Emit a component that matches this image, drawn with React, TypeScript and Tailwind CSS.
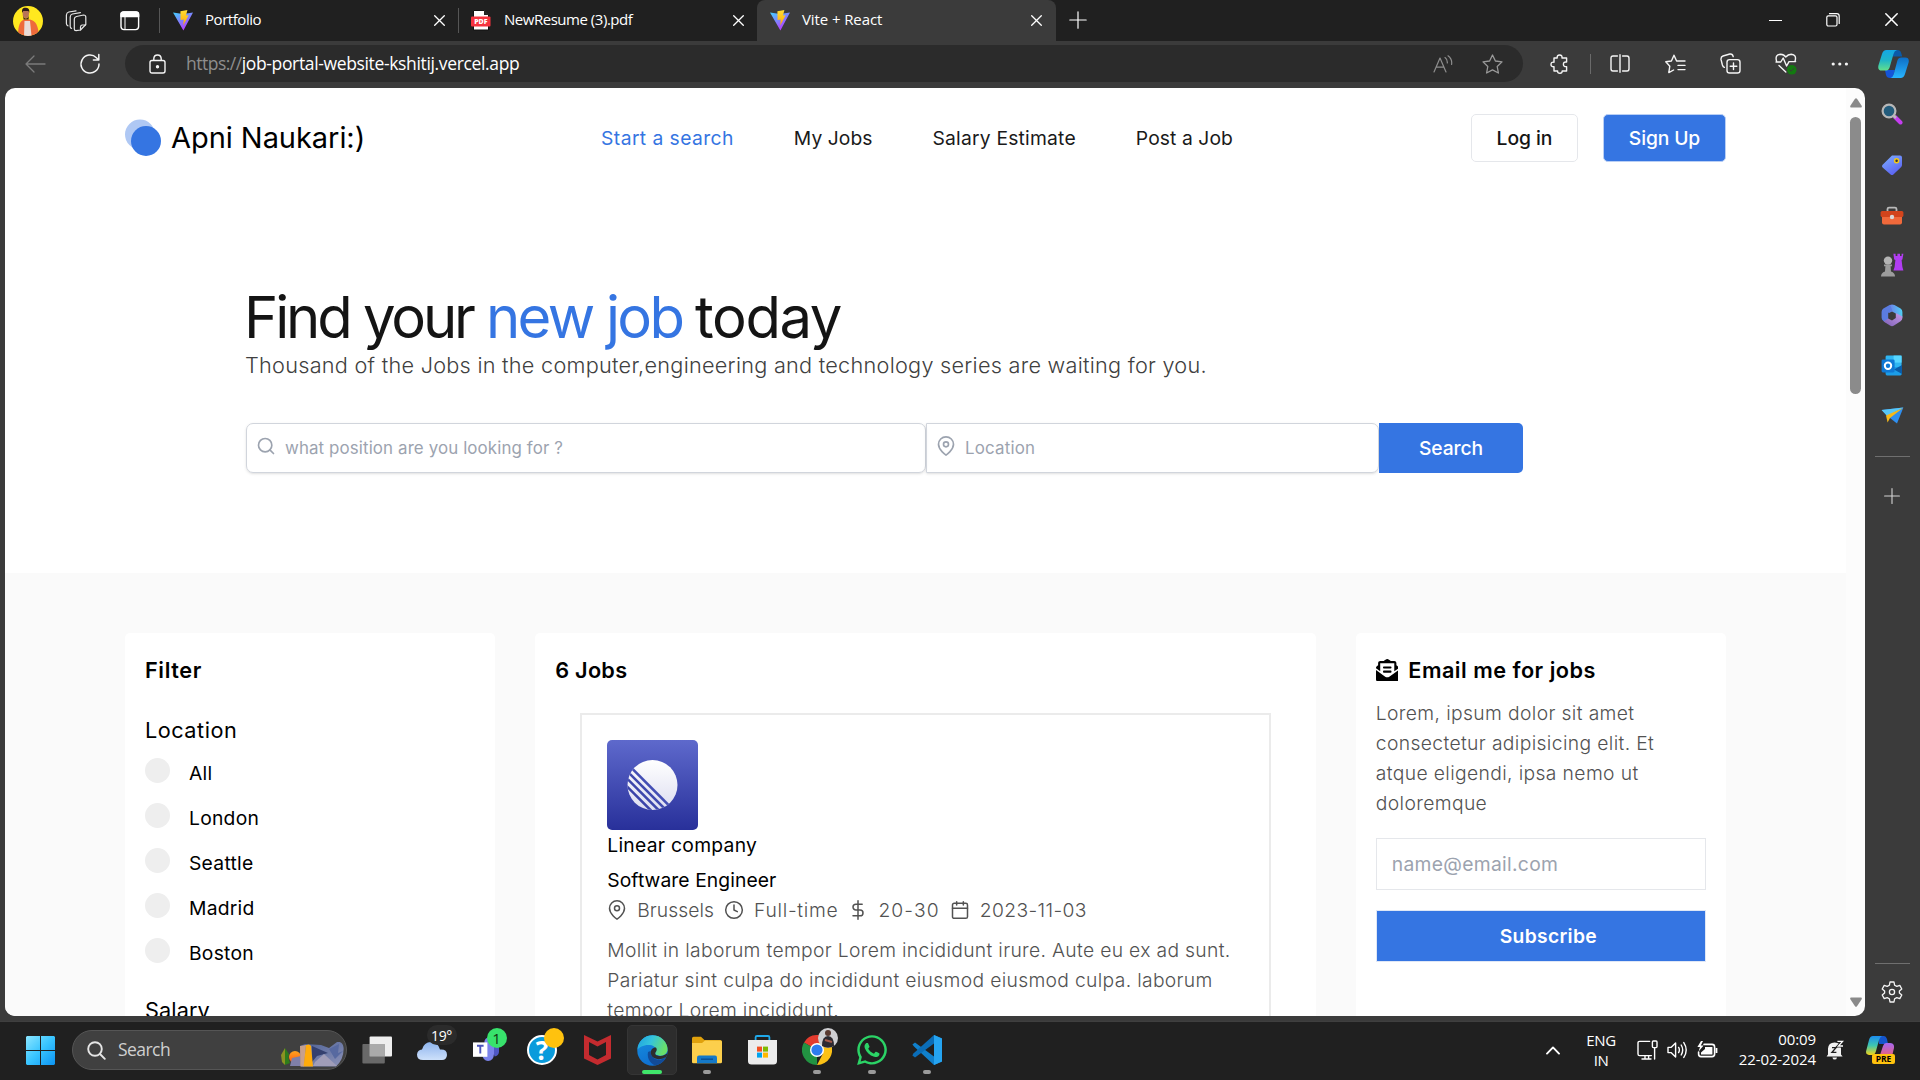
import type { ReactNode } from "react";
import { FiCalendar, FiClock, FiDollarSign, FiMapPin, FiSearch } from "react-icons/fi";
import { FaEnvelopeOpenText, FaWhatsapp } from "react-icons/fa";

/* ---------- shared bits ---------- */

const stroke = {
  fill: "none",
  stroke: "currentColor",
  strokeLinecap: "round" as const,
  strokeLinejoin: "round" as const,
};

function ViteIcon() {
  return (
    <svg width="20" height="21" viewBox="0 0 20 21">
      <defs>
        <linearGradient id="viteBody" x1="0" y1="0" x2="0.6" y2="1">
          <stop offset="0" stopColor="#41d1ff" />
          <stop offset="1" stopColor="#bd34fe" />
        </linearGradient>
        <linearGradient id="viteBolt" x1="0" y1="0" x2="0" y2="1">
          <stop offset="0" stopColor="#ffdd35" />
          <stop offset="1" stopColor="#ffa800" />
        </linearGradient>
      </defs>
      <path d="M0 2.6 L10 4 L20 2.6 L10.4 20.6Z" fill="url(#viteBody)" />
      <path d="M7.4 1.2 L14.4 0 L13 5.6 L15.6 5.2 L10.2 15.6 L10.8 9.4 L7.6 10Z" fill="url(#viteBolt)" />
    </svg>
  );
}

function PdfIcon() {
  return (
    <svg width="20" height="21" viewBox="0 0 20 21">
      <path d="M2.5 .5 H13 L17.5 5 V20 H2.5Z" fill="#fff" stroke="#111" strokeWidth="1" />
      <path d="M13 .5 V5 H17.5Z" fill="#222" />
      <rect x="0" y="6.5" width="19.5" height="10" rx="1" fill="#f5333f" />
      <text x="9.8" y="14" fontSize="7" fontWeight="800" fill="#fff" textAnchor="middle" fontFamily="Open Sans, sans-serif">
        PDF
      </text>
    </svg>
  );
}

function Cross({ size = 11 }: { size?: number }) {
  return (
    <svg width={size} height={size} viewBox="0 0 11 11" {...stroke} strokeWidth="1.3">
      <path d="M.7 .7 L10.3 10.3 M10.3 .7 L.7 10.3" />
    </svg>
  );
}

function Slot({ w, children }: { w: string; children?: ReactNode }) {
  return <div className={`flex h-full shrink-0 items-center justify-center ${w}`}>{children}</div>;
}

/* ---------- browser chrome ---------- */

function Avatar() {
  return (
    <svg width="30" height="30" viewBox="0 0 30 30">
      <defs>
        <clipPath id="avatarClip">
          <circle cx="15" cy="15" r="15" />
        </clipPath>
      </defs>
      <g clipPath="url(#avatarClip)">
        <rect width="30" height="30" fill="#ffe81f" />
        <path d="M5 30 C5 19 7 15 11 13.4 L17 13.4 C23 15 25 19 26 30Z" fill="#ee6a3b" />
        <path d="M11.5 15 L17 15 L18.5 30 L11 30Z" fill="#e9dcd8" />
        <ellipse cx="12.8" cy="7.6" rx="3.2" ry="4.6" fill="#b87456" />
        <path d="M9.2 7 C8.4 2.5 10.6 1.5 13 1.8 C16 2 16.8 4.2 16.2 7 L15.4 5 L10.2 5Z" fill="#2b1a18" />
        <path d="M10 9.8 C11 13.4 14.8 13.4 15.8 9.8 L15.6 13.4 L10.6 13.4Z" fill="#40241c" />
      </g>
    </svg>
  );
}

function TabBar() {
  return (
    <div className="flex h-[41px] shrink-0 items-center bg-[#202020] font-['Open_Sans',sans-serif] text-[15px] text-white">
      <Slot w="w-[56px]">
        <Avatar />
      </Slot>
      <Slot w="w-[43px]">
        <svg width="22" height="22" viewBox="0 0 22 22" {...stroke} strokeWidth="1.2" className="mr-1 text-neutral-200">
          <path d="M11.5 6.5 L18.5 5 Q20.8 5 20.8 7 V14.5 L15.5 20 L11 20.6 Q9.3 20.6 9.3 19 V9 Q9.4 7 11.5 6.5Z" />
          <path d="M20.5 15 H17 Q15.6 15.2 15.5 17 V20" />
          <path d="M6.6 18.4 Q5.2 18 5.2 16.4 V7 Q5.3 4.6 7.4 4 L15.4 2.6" />
          <path d="M3 15.8 Q1.4 15.4 1.4 13.6 V5 Q1.6 2.6 3.8 2 L11 .8" />
        </svg>
      </Slot>
      <Slot w="w-[60px]">
        <svg width="20" height="20" viewBox="0 0 20 20" {...stroke} strokeWidth="1.4" className="ml-[2px]">
          <rect x="1" y="1" width="17.6" height="17.6" rx="3" />
          <path d="M1 3 Q1 1 3.5 1 H16 Q18.6 1 18.6 3 V5.6 H1Z" fill="#fff" />
          <path d="M5 6 V18" strokeWidth="1" />
        </svg>
      </Slot>
      <div className="h-[25px] w-px bg-[#565656]" />
      <div className="flex h-full w-[298px] items-center pr-[13px] pl-[13px]">
        <ViteIcon />
        <span className="ml-3 flex-1 pb-[2px] tracking-[-0.45px]">Portfolio</span>
        <Cross />
      </div>
      <div className="h-[25px] w-px bg-[#565656]" />
      <div className="flex h-full w-[298px] items-center pr-[13px] pl-[12px]">
        <PdfIcon />
        <span className="ml-[13px] flex-1 pb-[2px] tracking-[-0.47px]">NewResume (3).pdf</span>
        <Cross />
      </div>
      <div className="flex h-full w-[299px] items-center rounded-t-lg bg-[#3b3b3b] pr-[14px] pl-[13px]">
        <ViteIcon />
        <span className="ml-3 flex-1 pb-[2px] tracking-[-0.1px]">Vite + React</span>
        <Cross />
      </div>
      <Slot w="w-[44px]">
        <svg width="18" height="18" viewBox="0 0 18 18" {...stroke} strokeWidth="1.2" className="-mt-[2px]">
          <path d="M9 .8 V17.2 M.8 9 H17.2" />
        </svg>
      </Slot>
      <div className="flex-1" />
      <Slot w="w-[58px]">
        <div className="h-px w-[13px] bg-white" />
      </Slot>
      <Slot w="w-[58px]">
        <svg width="14" height="14" viewBox="0 0 14 14" {...stroke} strokeWidth="1.2" className="-mt-[2px]">
          <rect x=".8" y="2.8" width="10.2" height="10.2" rx="1.5" />
          <path d="M3.5 .7 H10.8 Q13.2 .7 13.2 3 V10.5" />
        </svg>
      </Slot>
      <Slot w="w-[58px] pb-[2px]">
        <Cross size={13} />
      </Slot>
    </div>
  );
}

function CopilotIcon() {
  return (
    <svg width="31" height="28" viewBox="0 0 31 28">
      <defs>
        <linearGradient id="copA" x1="0" y1="0" x2="0" y2="1">
          <stop offset="0" stopColor="#14a7e6" />
          <stop offset=".5" stopColor="#1fb5c8" />
          <stop offset="1" stopColor="#63e08a" />
        </linearGradient>
        <linearGradient id="copB" x1="0" y1="0" x2="0" y2="1">
          <stop offset="0" stopColor="#0d6ec6" />
          <stop offset="1" stopColor="#28b5ff" />
        </linearGradient>
      </defs>
      <path d="M16 0 H19.5 Q22.5 0 23.2 3 L24.2 6.5 H14Z" fill="#0b5aa8" />
      <path d="M7 20 H17 L14.6 28 H12 Q8.8 28 8 25Z" fill="#1555d8" />
      <path d="M8.5 0 H19 Q16.4 .6 15.5 4 L11.6 17.5 Q10.7 20.6 7.6 20.6 H3.8 Q-.6 20.6 .4 15.5 L4 4 Q5.2 0 8.5 0Z" fill="url(#copA)" />
      <path d="M22.6 28 H12.6 Q14.8 27.4 15.8 24 L19.4 10.6 Q20.3 7.4 23.4 7.4 H27.2 Q31.6 7.4 30.6 12.5 L27 24 Q25.8 28 22.6 28Z" fill="url(#copB)" />
    </svg>
  );
}

function Toolbar() {
  return (
    <div className="flex h-[47px] shrink-0 items-center bg-[#3b3b3b] pb-[2px] text-neutral-100">
      <Slot w="w-[70px]">
        <svg width="21" height="18" viewBox="0 0 21 18" {...stroke} strokeWidth="1.3" className="text-[#7b7b7b]">
          <path d="M20 9 H1 M9 1 L1 9 L9 17" />
        </svg>
      </Slot>
      <Slot w="w-[40px]">
        <svg width="22" height="22" viewBox="0 0 22 22" {...stroke} strokeWidth="1.5">
          <path d="M20 11 A9 9 0 1 1 17.4 4.7 L19.5 6.8 M19.8 1.6 V7 H14.4" />
        </svg>
      </Slot>
      <div className="ml-[15px] flex h-[37px] w-[1398px] shrink-0 items-center rounded-full bg-[#2b2b2b]">
        <Slot w="w-[61px] pl-[3px]">
          <svg width="17" height="20" viewBox="0 0 17 20" {...stroke} strokeWidth="1.4">
            <rect x="1" y="6.5" width="15" height="12.5" rx="2" />
            <path d="M4.8 6.3 V4.6 Q5 1 8.5 1 Q12 1 12.2 4.6 V6.3" />
            <circle cx="8.5" cy="12.8" r="1" fill="currentColor" />
          </svg>
        </Slot>
        <div className="flex-1 font-['Open_Sans',sans-serif] text-[17.5px] tracking-[-0.35px] whitespace-nowrap">
          <span className="tracking-[-0.5px] text-[#8e8e8e]">https://</span>
          <span className="text-white">job-portal-website-kshitij.vercel.app</span>
        </div>
        <Slot w="w-[50px]">
          <svg width="20" height="18" viewBox="0 0 20 18" {...stroke} strokeWidth="1.2" className="text-[#8e8e8e]">
            <path d="M1 17 L7 3 L13 17 M3 12.2 H11 M12 2.6 Q14.6 4.5 14.3 8 M15 .8 Q19.4 4 18.6 9.4" />
          </svg>
        </Slot>
        <Slot w="w-[49px]">
          <svg width="21" height="20" viewBox="0 0 21 20" {...stroke} strokeWidth="1.3" className="text-[#9a9a9a]">
            <path d="M10.5 1 L13.4 7 L20 7.9 L15.2 12.5 L16.4 19 L10.5 15.9 L4.6 19 L5.8 12.5 L1 7.9 L7.6 7Z" />
          </svg>
        </Slot>
        <div className="w-[6px]" />
      </div>
      <Slot w="w-[74px]">
        <svg width="20" height="20" viewBox="0 0 20 20" {...stroke} strokeWidth="1.4">
          <path d="M4 4 H7.2 Q6.8 1 9.6 1 Q12.4 1 12 4 H16.6 V8 Q13.4 7.6 13.4 10.3 Q13.4 13 16.6 12.6 V17 H12.2 Q12.2 19.2 10 19.2 Q7.4 19.2 7.6 17 H4 V12.8 Q1 13 1 10.4 Q1 7.8 4 8.2Z" />
        </svg>
      </Slot>
      <div className="mr-[6px] -ml-[7px] h-[20px] w-px shrink-0 bg-[#6a6a6a]" />
      <Slot w="w-[45px]">
        <svg width="20" height="19" viewBox="0 0 20 19" {...stroke} strokeWidth="1.4">
          <path d="M7.4 2 H3 Q1 2 1 4.2 V14.8 Q1 17 3 17 H7.4 M12.6 2 H17 Q19 2 19 4.2 V14.8 Q19 17 17 17 H12.6 M10 .7 V18.3" />
        </svg>
      </Slot>
      <Slot w="w-[66px]">
        <svg width="21" height="20" viewBox="0 0 21 20" {...stroke} strokeWidth="1.4">
          <path d="M11.6 7 L9 1.2 L6.4 7 L.8 7.8 L4.8 12.2 L3.8 18.6 L8.6 16 M11.6 7 H20 M13 11.4 H20 M13 15.6 H20" />
        </svg>
      </Slot>
      <Slot w="w-[44px]">
        <svg width="21" height="21" viewBox="0 0 21 21" {...stroke} strokeWidth="1.4">
          <rect x="7" y="6.6" width="13" height="13.4" rx="2.6" />
          <path d="M13.5 10 V16.6 M10.2 13.3 H16.8 M4.4 14.4 Q3 14 2.4 12 L1 6.4 Q.8 3.8 3 3 L9.8 1 Q12.6 .6 13.2 3.6" />
        </svg>
      </Slot>
      <Slot w="w-[68px]">
        <svg width="22" height="22" viewBox="0 0 22 22" {...stroke} strokeWidth="1.4">
          <path d="M1.6 8.4 Q-.4 1.4 5.6 1.2 Q8.8 1.2 10.8 4 Q13 1.2 16.2 1.2 Q22 1.6 20 8.4 M1 9 H5.8 L8.2 5 L11.6 13 L14 8.6 H20.6 M4 12.6 L10.8 19" />
          <circle cx="16.8" cy="16.8" r="4.8" fill="#137a10" stroke="none" />
          <path d="M14.8 17 L16.2 18.3 L18.8 15.5" strokeWidth="1" stroke="#3b3b3b" />
        </svg>
      </Slot>
      <Slot w="w-[40px]">
        <svg width="18" height="4" viewBox="0 0 18 4" fill="currentColor">
          <circle cx="2.2" cy="2" r="1.6" />
          <circle cx="8.8" cy="2" r="1.6" />
          <circle cx="15.4" cy="2" r="1.6" />
        </svg>
      </Slot>
      <Slot w="w-[60px] pl-[6px]">
        <CopilotIcon />
      </Slot>
    </div>
  );
}

/* ---------- website ---------- */

function Header() {
  return (
    <header className="flex h-[100px] items-center justify-between">
      <div className="flex items-center">
        <svg width="37" height="38" viewBox="0 0 37 38">
          <circle cx="15" cy="15.5" r="15" fill="#afc8f4" />
          <circle cx="21" cy="22" r="15" fill="#3575e2" />
        </svg>
        <span className="mb-[2px] ml-[9px] w-[192px] text-[29px] leading-none font-[370] tracking-[-0.05px] whitespace-nowrap text-black">
          Apni Naukari:)
        </span>
      </div>
      <nav className="flex gap-[60px] text-[19.3px] font-[370] whitespace-nowrap text-[#1a1a1a]">
        <a className="tracking-[0.42px] text-[#3575e2]">Start a search</a>
        <a className="tracking-[0.05px]">My Jobs</a>
        <a className="tracking-[0.2px]">Salary Estimate</a>
        <a className="tracking-[0.08px]">Post a Job</a>
      </nav>
      <div className="flex gap-[25px] text-[19.3px] font-medium">
        <button className="h-[48px] w-[107px] rounded-[5px] border border-gray-200 font-[450] tracking-[-0.05px] text-[#141414]">
          Log in
        </button>
        <button className="h-[48px] w-[123px] rounded-[5px] border border-[#b9cff5] bg-[#3575e2] tracking-[-0.12px] text-white">
          Sign Up
        </button>
      </div>
    </header>
  );
}

function Hero() {
  return (
    <section className="mt-[99px] ml-[121px]">
      <h1 className="-ml-[2px] flex text-[58px] leading-[60px] tracking-[-3.1px] whitespace-nowrap text-[#141414]">
        <span className="w-[242px]">Find your</span>
        <span className="w-[209px] tracking-[-2.7px] text-[#3575e2]">new job</span>
        <span className="tracking-[-1.4px]">today</span>
      </h1>
      <p className="mt-[3px] -ml-px text-[21.7px] leading-[30px] font-[350] tracking-[0.255px] whitespace-nowrap text-[#404040]">
        Thousand of the Jobs in the computer,engineering and technology series are waiting for you.
      </p>
      <div className="mt-[43px] flex h-[50px] text-[16.9px] text-[#9ca3af]">
        <div className="flex w-[680px] items-center rounded-[7px] border-[1.5px] border-gray-300 pl-[9px] shadow-sm">
          <FiSearch className="-mt-1 size-[20px]" />
          <span className="mt-[2px] ml-[9px] tracking-[0.11px]">what position are you looking for ?</span>
        </div>
        <div className="flex w-[453px] items-center rounded-r-[7px] border-[1.5px] border-gray-300 pl-[9px] shadow-sm">
          <FiMapPin className="-mt-1 size-[20px]" />
          <span className="mt-[2px] ml-[9px] tracking-[0.2px]">Location</span>
        </div>
        <button className="w-[144px] rounded-r-[5px] bg-[#3575e2] text-[19.3px] font-medium tracking-[-0.1px] text-white">
          Search
        </button>
      </div>
    </section>
  );
}

function FilterCard() {
  const cities = ["All", "London", "Seattle", "Madrid", "Boston"];
  return (
    <div className="h-[500px] rounded-[5px] bg-white px-5 pt-5 text-black">
      <h2 className="text-[21.7px] leading-[34px] font-semibold tracking-[0.6px]">Filter</h2>
      <h3 className="mt-[26px] mb-[3px] text-[21.7px] leading-[34px] tracking-[0.5px]">Location</h3>
      {cities.map((city) => (
        <div key={city} className="flex h-[45px] items-center gap-[19px] text-[19.3px] font-[370] tracking-[0.25px]">
          <span className="mb-[5px] size-[25px] rounded-full bg-[#eeeeee]" />
          <span className="mt-[2px]">{city}</span>
        </div>
      ))}
      <h3 className="mt-[18px] text-[21.7px] leading-[34px] tracking-[0.1px]">Salary</h3>
    </div>
  );
}

function LinearLogo() {
  return (
    <svg width="91" height="90" viewBox="0 0 91 90" className="rounded-[5px]">
      <defs>
        <linearGradient id="linBg" x1="0" y1="0" x2="0" y2="1">
          <stop offset="0" stopColor="#5e69cc" />
          <stop offset="1" stopColor="#28309a" />
        </linearGradient>
        <linearGradient id="linFg" x1="0" y1="0" x2="0" y2="1">
          <stop offset="0" stopColor="#ffffff" />
          <stop offset="1" stopColor="#dcddf0" />
        </linearGradient>
        <clipPath id="linClip">
          <circle cx="45.5" cy="45" r="25" />
        </clipPath>
      </defs>
      <rect width="91" height="90" fill="url(#linBg)" />
      <g clipPath="url(#linClip)">
        <rect x="20" y="20" width="51" height="51" fill="url(#linFg)" />
        <g stroke="#434eb4" strokeWidth="2.6">
          <path d="M20 23.5 L70 73.5" />
          <path d="M14 25 L64 75" stroke="#3f49ae" />
          <path d="M12 30.5 L62 80.5" stroke="#3c46ab" />
          <path d="M8 34.5 L58 84.5" stroke="#3a43a8" />
        </g>
      </g>
    </svg>
  );
}

function JobsCard() {
  return (
    <div className="col-span-2 h-[500px] rounded-[5px] bg-white px-5 pt-5 text-black">
      <h2 className="text-[21.7px] leading-[34px] font-semibold tracking-[0.25px]">6 Jobs</h2>
      <div className="mx-[25px] mt-[26px] h-[400px] border-2 border-[#ebebeb] p-[25px] text-[19.3px] leading-[30px] font-[370] whitespace-nowrap">
        <LinearLogo />
        <p className="tracking-[0.27px]">Linear company</p>
        <p className="mt-[5px] tracking-[0.08px]">Software Engineer</p>
        <div className="flex items-center gap-[10px] font-[350] text-[#525252]">
          <FiMapPin className="size-[20px]" strokeWidth={1.8} />
          <span className="tracking-[0.06px]">Brussels</span>
          <FiClock className="size-[20px]" strokeWidth={1.8} />
          <span className="tracking-[0.7px]">Full-time</span>
          <FiDollarSign className="size-[20px]" strokeWidth={1.8} />
          <span className="tracking-[1.1px]">20-30</span>
          <FiCalendar className="size-[20px]" strokeWidth={1.8} />
          <span className="tracking-[0.36px]">2023-11-03</span>
        </div>
        <p className="mt-[10px] font-[350] tracking-[0.325px] text-[#525252]">
          Mollit in laborum tempor Lorem incididunt irure. Aute eu ex ad sunt.
          <br />
          Pariatur sint culpa do incididunt eiusmod eiusmod culpa. laborum
          <br />
          tempor Lorem incididunt.
        </p>
      </div>
    </div>
  );
}

function EmailCard() {
  return (
    <div className="h-[500px] rounded-[5px] bg-white px-5 pt-5">
      <h2 className="flex items-center gap-[10px] text-[21.7px] leading-[34px] font-semibold tracking-[0.5px] whitespace-nowrap text-black">
        <FaEnvelopeOpenText className="size-[22.5px]" />
        Email me for jobs
      </h2>
      <p className="mt-[11px] text-[19.3px] leading-[30px] font-[350] tracking-[0.37px] whitespace-nowrap text-[#525252]">
        Lorem, ipsum dolor sit amet
        <br />
        consectetur adipisicing elit. Et
        <br />
        atque eligendi, ipsa nemo ut
        <br />
        doloremque
      </p>
      <div className="mt-[20px] flex h-[52px] items-center border border-gray-200 pl-[15px] text-[19.3px] tracking-[0.3px] text-[#9ca3af]">
        name@email.com
      </div>
      <button className="mt-[20px] flex h-[52px] w-full items-center justify-center border border-[#dfe7f6] bg-[#3575e2] pl-[15px] text-[19.3px] font-semibold tracking-[0.3px] text-white">
        Subscribe
      </button>
    </div>
  );
}

function Website() {
  return (
    <main className="h-full flex-1 overflow-hidden bg-white font-['Inter',sans-serif]">
      <div className="h-[485px] px-[120px]">
        <Header />
        <Hero />
      </div>
      <div className="grid grid-cols-4 gap-10 bg-[#fafafa] px-[120px] pt-[60px]">
        <FilterCard />
        <JobsCard />
        <EmailCard />
      </div>
    </main>
  );
}

function ScrollBar() {
  return (
    <div className="flex h-full w-[19px] shrink-0 flex-col items-center bg-[#fcfcfc]">
      <svg width="12" height="10" viewBox="0 0 12 10" className="mt-[10px]" fill="#8a8a8a">
        <path d="M5 .8 Q6 -.4 7 .8 L11.8 8 Q12 9.4 11 9.4 H1 Q0 9.4 .2 8Z" />
      </svg>
      <div className="mt-[9px] h-[277px] w-[11px] rounded-full bg-[#8b8b8b]" />
      <div className="flex-1" />
      <svg width="12" height="10" viewBox="0 0 12 10" className="mb-[9px]" fill="#8a8a8a">
        <path d="M5 9.2 Q6 10.4 7 9.2 L11.8 2 Q12 .6 11 .6 H1 Q0 .6 .2 2Z" />
      </svg>
    </div>
  );
}

/* ---------- edge sidebar ---------- */

function SideBar() {
  return (
    <aside className="flex h-full w-[55px] shrink-0 flex-col items-center bg-[#3b3b3b] pr-px">
      <div className="flex h-[52px] items-center">
        <svg width="22" height="22" viewBox="0 0 22 22">
          <path d="M14 14 L19.5 19.5" stroke="#c53df0" strokeWidth="4" strokeLinecap="round" />
          <path d="M12.5 12.5 L15 15" stroke="#b9b9b9" strokeWidth="2.5" />
          <circle cx="8" cy="8" r="6.4" fill="#235c7c" stroke="#b7b7b7" strokeWidth="2.2" />
        </svg>
      </div>
      <div className="flex h-[50px] items-center">
        <svg width="22" height="22" viewBox="0 0 22 22">
          <defs>
            <linearGradient id="tagG" x1="0" y1="0" x2=".6" y2="1">
              <stop offset="0" stopColor="#7fb2ff" />
              <stop offset="1" stopColor="#5b62f2" />
            </linearGradient>
          </defs>
          <path d="M11 1.4 H19 Q21 1.4 21 3.4 V11 Q21 12 20.2 13 L12.4 20.4 Q11 21.6 9.6 20.4 L1.6 13.6 Q.4 12.4 1.4 11Z" fill="url(#tagG)" />
          <circle cx="15.6" cy="6.8" r="2" fill="#333" stroke="#f5c915" strokeWidth="1.5" />
        </svg>
      </div>
      <div className="flex h-[50px] items-center pt-[2px]">
        <svg width="24" height="20" viewBox="0 0 24 20">
          <path d="M7.5 5 V3 Q7.6 1.6 9 1.6 H15 Q16.4 1.6 16.5 3 V5" fill="none" stroke="#b9b9b9" strokeWidth="1.8" />
          <path d="M2 10 H22 V16.6 Q22 18.6 20 18.6 H4 Q2 18.6 2 16.6Z" fill="#f0693b" />
          <rect x=".6" y="5" width="22.8" height="6" rx="1.6" fill="#d2441c" />
          <circle cx="12" cy="11" r="2.2" fill="#d9d9d9" />
        </svg>
      </div>
      <div className="flex h-[50px] items-center">
        <svg width="24" height="24" viewBox="0 0 24 24">
          <path d="M13.4 .8 H15.6 V3 H17.4 V.8 H20 V3 H21.6 V.8 H23.4 L22.4 6.4 L21.6 7 L22.4 14 L23.4 17.4 H13.4 L14.6 14 L15.4 7 L14.2 6.4Z" fill="#b13df2" />
          <circle cx="8" cy="7.6" r="4.2" fill="#b4b4b4" />
          <path d="M4 11.6 H12 V13.2 H10.6 L11 18.6 Q15 20 15 23.4 H1 Q1 20 5 18.6 L5.4 13.2 H4Z" fill="#9c9c9c" />
        </svg>
      </div>
      <div className="flex h-[50px] items-center">
        <svg width="22" height="23" viewBox="0 0 22 23">
          <defs>
            <linearGradient id="m365a" x1="0" y1="0" x2="1" y2="0">
              <stop offset="0" stopColor="#6f7de8" />
              <stop offset="1" stopColor="#4fd0f5" />
            </linearGradient>
            <linearGradient id="m365b" x1="0" y1="1" x2="1" y2="0">
              <stop offset="0" stopColor="#7d5fb5" />
              <stop offset="1" stopColor="#c79be8" />
            </linearGradient>
          </defs>
          <path d="M9 1 L11 .4 L13.5 1 L19.6 4.6 Q21.4 5.8 21.4 8 V13.4 L14.8 9.4 L11 7.4 L8 9Z" fill="url(#m365a)" />
          <path d="M9 .8 L11.4 6.6 L7.2 9 V19.8 L2.4 17 Q.6 15.8 .6 13.6 V8 Q.6 5.8 2.4 4.6Z" fill="#5b7ce0" />
          <path d="M21.4 12.6 V14 Q21.4 16 19.6 17.2 L13 21.6 Q11 22.8 9 21.6 L2.6 17.4 L7.2 14.4 L11 16.6 L14.8 14 L14.8 9Z" fill="url(#m365b)" />
        </svg>
      </div>
      <div className="flex h-[50px] items-center">
        <svg width="22" height="21" viewBox="0 0 22 21">
          <rect x="4.6" y=".6" width="16" height="13" rx="1.4" fill="#2fb6f2" />
          <rect x="12.6" y=".6" width="8" height="7" fill="#57d6ff" />
          <path d="M4.6 12 H20.8 V18.8 Q20.8 20.4 19.2 20.4 H6 Q4.6 20.4 4.6 18.8Z" fill="#1b9de8" />
          <path d="M13 14.6 L21 10 V19Z" fill="#0a5ca8" />
          <rect x=".6" y="4.4" width="13" height="13" rx="1.4" fill="#0f78d4" />
          <circle cx="7" cy="10.8" r="3.2" fill="none" stroke="#fff" strokeWidth="2" />
        </svg>
      </div>
      <div className="flex h-[50px] items-center">
        <svg width="23" height="17" viewBox="0 0 23 17">
          <path d="M.6 3 L22.4 .6 L16 16.4 L9.6 11.6Z" fill="#2f8ff0" />
          <path d="M.6 3 L22.4 .6 L6 9Z" fill="#57c7f7" />
          <path d="M5 8.4 L22 1 L9 11 L6.6 15.6Z" fill="#f6b91a" />
        </svg>
      </div>
      <div className="mt-[16px] h-px w-[35px] bg-[#6f6f6f]" />
      <svg width="16" height="16" viewBox="0 0 16 16" {...stroke} strokeWidth="1.1" className="mt-[31px] text-neutral-300">
        <path d="M8 .6 V15.4 M.6 8 H15.4" />
      </svg>
      <div className="flex-1" />
      <div className="h-px w-[35px] bg-[#6f6f6f]" />
      <svg width="22" height="22" viewBox="0 0 22 22" {...stroke} strokeWidth="1.3" className="mt-[17px] mb-[18px] text-neutral-100">
        <path d="M9 1 H13 L13.6 4.2 L15.8 5.4 L18.8 4.4 L20.8 8 L18.4 10 V12 L20.8 14 L18.8 17.6 L15.8 16.6 L13.6 17.8 L13 21 H9 L8.4 17.8 L6.2 16.6 L3.2 17.6 L1.2 14 L3.6 12 V10 L1.2 8 L3.2 4.4 L6.2 5.4 L8.4 4.2Z" />
        <circle cx="11" cy="11" r="2.6" />
      </svg>
    </aside>
  );
}

/* ---------- taskbar ---------- */

function WindowsLogo() {
  return (
    <svg width="29" height="29" viewBox="0 0 29 29">
      <defs>
        <linearGradient id="winG" x1="0" y1="0" x2="1" y2="1">
          <stop offset="0" stopColor="#8ce6ff" />
          <stop offset=".5" stopColor="#38c4ff" />
          <stop offset="1" stopColor="#0c93f2" />
        </linearGradient>
      </defs>
      <path d="M1 0 H14 V14 H0 V1Z M15 0 H28 L29 1 V14 H15Z M0 15 H14 V29 H1 L0 28Z M15 15 H29 V28 L28 29 H15Z" fill="url(#winG)" />
    </svg>
  );
}

function Landscape() {
  return (
    <svg width="63" height="25" viewBox="0 0 63 25">
      <defs>
        <linearGradient id="sunG" x1="0" y1="0" x2="0" y2="1">
          <stop offset="0" stopColor="#ffa41f" />
          <stop offset="1" stopColor="#ff5a12" />
        </linearGradient>
        <linearGradient id="rockG" x1="0" y1="0" x2="1" y2="1">
          <stop offset="0" stopColor="#4a5f95" />
          <stop offset="1" stopColor="#8e93b8" />
        </linearGradient>
      </defs>
      <path d="M4 6 L8 12 L7.4 16 L9 21 L4 23Z" fill="#2f7c1b" />
      <path d="M4 6 L0 13 L1 20 L4 23Z" fill="#8b9322" />
      <circle cx="14" cy="15" r="6" fill="url(#sunG)" />
      <path d="M9 24 L11 16 L20 14 L22 24Z" fill="#7f7fa8" />
      <path d="M19 4 L24 2 L40 3 L48 6 L56 0 Q62 -1 62.6 6 Q63 17 55 24.6 H20Z" fill="url(#rockG)" />
      <path d="M19 4 L25 3 L23 24.6 H19.4Z" fill="#c7a08c" />
      <path d="M31 4 L47 11 L36 14 L31 20Z" fill="#34406f" />
      <path d="M34 20 L43 12 L56 24 H32Z" fill="#a09db8" />
      <path d="M48 7 L58 2 L57 11 L62 9 L54 17Z" fill="#5769a0" />
      <path d="M25 3 Q29 1.6 30 4 L32 24.6 H22.6Z" fill="#ffab0a" />
    </svg>
  );
}

function EdgeIcon() {
  return (
    <svg width="31" height="31" viewBox="0 0 31 31">
      <defs>
        <linearGradient id="edgeA" x1="0" y1="0" x2="1" y2=".3">
          <stop offset="0" stopColor="#1c9fe0" />
          <stop offset=".5" stopColor="#35c4dc" />
          <stop offset="1" stopColor="#69e06a" />
        </linearGradient>
        <linearGradient id="edgeB" x1="0" y1="0" x2=".4" y2="1">
          <stop offset="0" stopColor="#1790e0" />
          <stop offset="1" stopColor="#0f6fd0" />
        </linearGradient>
        <clipPath id="edgeClip">
          <circle cx="15.5" cy="15.5" r="15.2" />
        </clipPath>
      </defs>
      <g clipPath="url(#edgeClip)">
        <rect width="31" height="31" fill="url(#edgeB)" />
        <path d="M11 17 C9.6 24 14 30 21 31 L31 31 V22 L24 24.6 C19 25.6 13 22 13.6 16Z" fill="#124b98" />
        <path d="M0 15 C1 6 7 0 15.5 0 C25 0 31 6 31 13.4 C31 18 27 20.8 23 20.8 C19.4 20.8 17.6 19 18.4 17.6 C20.4 14 18 10.6 13 10 C7 9.4 2.4 12 0 15Z" fill="url(#edgeA)" />
        <path d="M19 12.6 C20.6 14.6 19.4 16.2 18.4 17.6 C17.6 19.2 18.8 20.6 22 21 C25.6 21.4 28.6 20 31 17.6 L31 23 L28 22.6 C23 25.4 15 24.6 13.8 18.6 C13.4 14.6 16 12.4 19 12.6Z" fill="#2d2d2d" />
      </g>
    </svg>
  );
}

function TaskIcon({ children, running }: { children: ReactNode; running?: boolean }) {
  return (
    <div className="relative flex h-[50px] w-[55px] shrink-0 items-center justify-center">
      {children}
      {running && <span className="absolute bottom-[1px] h-[4px] w-[8px] rounded-full bg-[#9a9a9a]" />}
    </div>
  );
}

function Taskbar() {
  return (
    <footer className="flex h-[59px] shrink-0 items-center border-t border-[#3f3f3f] bg-[#202020] pb-[2px] font-['Open_Sans',sans-serif] text-white">
      <div className="ml-[26px]">
        <WindowsLogo />
      </div>
      <div className="ml-[17px] flex h-[40px] w-[275px] items-center rounded-full border border-[#555] bg-[#404040] pr-[2px] pl-[14px]">
        <svg width="19" height="19" viewBox="0 0 19 19" {...stroke} strokeWidth="1.9" className="text-neutral-200">
          <circle cx="8" cy="8" r="6.8" />
          <path d="M13 13 L17.8 17.8" />
        </svg>
        <span className="ml-[12px] flex-1 pb-px text-[17.5px] tracking-[-0.55px] text-[#cfcfcf]">Search</span>
        <div className="mt-[9px]">
          <Landscape />
        </div>
      </div>
      <div className="ml-[2.5px] flex items-center">
        <TaskIcon>
          <svg width="30" height="28" viewBox="0 0 30 28">
            <rect x="7.6" y=".4" width="22.4" height="20" rx="1" fill="#eeeeee" />
            <rect x=".4" y="8" width="22.4" height="19.6" rx="1" fill="#777" fillOpacity=".85" />
            <path d="M7.6 8 H22.8 V20.4 H7.6Z" fill="#aaa" />
          </svg>
        </TaskIcon>
        <TaskIcon>
          <svg width="30" height="22" viewBox="0 0 30 22" className="mt-[2px]">
            <defs>
              <linearGradient id="cloudG" x1="0" y1="0" x2="0" y2="1">
                <stop offset="0" stopColor="#8db4ee" />
                <stop offset="1" stopColor="#cde0fa" />
              </linearGradient>
            </defs>
            <path d="M6 20 Q0 20 0 14.5 Q.4 10 5 9.6 Q7 2 14 2 Q21 2 23 9.6 Q30 9 30 15 Q29.6 20 25 20Z" fill="url(#cloudG)" />
          </svg>
          <span className="absolute top-0 left-[22px] flex h-[20px] w-[30px] items-center justify-center rounded-full bg-[#2b2b2b] text-[14px] tracking-[-0.4px]">
            19°
          </span>
        </TaskIcon>
        <TaskIcon>
          <svg width="28" height="26" viewBox="0 0 28 26">
            <circle cx="16" cy="5" r="4.6" fill="#7b83eb" />
            <path d="M18 8 H26 V15 Q25.6 19 21.6 19.4Z" fill="#4f57c4" />
            <path d="M9 8 H21 V17 Q20.6 24 15 24 Q10 24 9 17Z" fill="#7b83eb" />
            <rect x="0" y="5.4" width="14.4" height="14.4" fill="#fff" />
            <path d="M4 8.8 H10.6 M7.3 8.8 V16.4" stroke="#4b53bc" strokeWidth="1.9" />
          </svg>
          <span className="absolute top-[3px] left-[27px] flex size-[20px] items-center justify-center rounded-full bg-[#38e26c] text-[15px] text-[#113311]">
            1
          </span>
        </TaskIcon>
        <TaskIcon>
          <span className="flex size-[30px] items-center justify-center rounded-full border-2 border-white bg-[#0a9bdc] text-[26px] leading-none font-bold">
            ?
          </span>
          <span className="absolute top-[3px] left-[29px] size-[20px] rounded-full bg-[#ffc20e]" />
        </TaskIcon>
        <TaskIcon>
          <svg width="27" height="30" viewBox="0 0 27 30">
            <path d="M0 0 L13.5 6.6 L27 0 V23.4 L13.5 30 L0 23.4Z M5 7 V20 L13.5 24.4 L22 20 V7 L13.5 11.6Z" fill="#c42b2f" fillRule="evenodd" />
          </svg>
        </TaskIcon>
        <div className="relative flex h-[50px] w-[55px] items-center justify-center">
          <div className="flex size-[50px] items-center justify-center rounded-[5px] border border-[#353535] bg-[#2d2d2d]">
            <EdgeIcon />
          </div>
          <span className="absolute bottom-[1px] h-[4px] w-[20px] rounded-full bg-[#40e66b]" />
        </div>
        <TaskIcon running>
          <svg width="30" height="28" viewBox="0 0 30 28">
            <path d="M0 2.4 Q0 .8 1.6 .8 H9 L12.4 4 H28 Q30 4 30 6 V10 H0Z" fill="#e0a10c" />
            <path d="M0 7 H10 L13 4.4 H28.6 Q30 4.4 30 6 V26 Q30 27.2 28.6 27.2 H1.4 Q0 27.2 0 26Z" fill="#fccf4c" />
            <path d="M5 27.2 V21.6 Q5 19.6 7 19.6 H23 Q25 19.6 25 21.6 V27.2Z" fill="#1579c8" />
            <path d="M9 23.2 H21" stroke="#0b4f92" strokeWidth="1.4" />
          </svg>
        </TaskIcon>
        <TaskIcon>
          <svg width="29" height="30" viewBox="0 0 29 30">
            <path d="M7.6 6 V2.2 Q7.6 1 9 1 H20 Q21.4 1 21.4 2.2 V6" fill="none" stroke="#1fa9ea" strokeWidth="1.8" />
            <path d="M0 5 H29 V26 Q29 29.6 25.4 29.6 H3.6 Q0 29.6 0 26Z" fill="#ececec" />
            <path d="M9 11.6 H14 V16.6 H9Z" fill="#f25022" />
            <path d="M15 11.6 H20 V16.6 H15Z" fill="#7fba00" />
            <path d="M9 17.6 H14 V22.6 H9Z" fill="#00a4ef" />
            <path d="M15 17.6 H20 V22.6 H15Z" fill="#ffb900" />
          </svg>
        </TaskIcon>
        <TaskIcon running>
          <svg width="30" height="30" viewBox="0 0 30 30">
            <path d="M15 15 L2 7.5 A15 15 0 0 1 28 7.5Z" fill="#e33b2e" />
            <path d="M15 15 L15 30 A15 15 0 0 1 2 7.5Z" fill="#229342" />
            <path d="M15 8 H28.4 A15 15 0 0 1 15 30 L21 18.5Z" fill="#fbc116" />
            <circle cx="15" cy="15" r="7" fill="#fff" />
            <circle cx="15" cy="15" r="5.6" fill="#2e7cf0" />
          </svg>
          <svg width="20" height="20" viewBox="0 0 20 20" className="absolute top-[3px] left-[28px]">
            <circle cx="10" cy="10" r="10" fill="#cfcfd2" />
            <circle cx="10" cy="5" r="3" fill="#5a3a30" />
            <path d="M4 18 Q4 8 10 8 Q16 8 16 18 Q10 21.6 4 18Z" fill="#2d2a30" />
            <path d="M7 12 L14 14" stroke="#a55a4a" strokeWidth="2" />
          </svg>
        </TaskIcon>
        <TaskIcon running>
          <FaWhatsapp className="size-[34px] text-[#2bd366]" />
        </TaskIcon>
        <TaskIcon running>
          <svg width="30" height="30" viewBox="0 0 30 30">
            <path d="M22 0 L30 3.4 V26.6 L22 30 L2 11.4 L.4 9.6 L3 7.4 L22 21.6Z" fill="#1080cc" />
            <path d="M22 0 V8.4 L3 22.6 L.4 20.6 L1.4 18.6Z" fill="#0a6db8" />
            <path d="M22 0 L30 3.4 V26.6 L22 30Z" fill="#25a4f1" />
          </svg>
        </TaskIcon>
      </div>
      <div className="flex-1" />
      <svg width="14" height="9" viewBox="0 0 14 9" {...stroke} strokeWidth="1.9">
        <path d="M1 7.6 L7 1.4 L13 7.6" />
      </svg>
      <div className="mb-px ml-[25px] w-[32px] text-center text-[15px] leading-[20px] tracking-[-0.4px]">
        ENG
        <br />
        IN
      </div>
      <svg width="21" height="20" viewBox="0 0 21 20" {...stroke} strokeWidth="1.4" className="ml-[20px]">
        <path d="M12.6 1.4 H2.6 Q1 1.4 1 3 V14 Q1 15.6 2.6 15.6 H14.4 M5 19 H14 M8 15.8 V19 M11.6 15.8 V19 M17.6 8 V19" />
        <rect x="15.4" y="1" width="4.6" height="6.6" rx="1" />
      </svg>
      <svg width="21" height="18" viewBox="0 0 21 18" {...stroke} strokeWidth="1.4" className="ml-[9px]">
        <path d="M1 6.4 H4 L8.6 2 V16 L4 11.6 H1Z M11.6 6.4 Q13.2 9 11.6 11.6 M14.2 4 Q17.2 9 14.2 14 M16.8 1.6 Q21.6 9 16.8 16.4" />
      </svg>
      <svg width="21" height="17" viewBox="0 0 21 17" className="mb-[2px] ml-[9px]">
        <path d="M7 3.4 H15 Q17.6 3.4 17.6 6 V13 Q17.6 15.6 15 15.6 H4 Q1.6 15.6 1.6 13 V11" {...stroke} strokeWidth="1.6" />
        <path d="M8 6 H15.4 V13.4 H4 V11.6 L8 8Z" fill="#fff" />
        <path d="M18.6 7 H20.4 V12 H18.6Z" fill="#fff" />
        <path d="M4 0 L.4 6 H3 L1.6 10.4 L6.6 4.4 H3.8 L6 0Z" fill="#fff" />
      </svg>
      <div className="mb-[2px] ml-[10px] w-[88px] text-right text-[15px] leading-[20px] tracking-[-0.1px]">
        00:09
        <br />
        22-02-2024
      </div>
      <svg width="18" height="20" viewBox="0 0 18 20" className="ml-[10px]">
        <path d="M2 14.6 V8.6 Q2.4 2.4 8.6 2.4 Q15 2.4 15 8.6 V14.6 L16.6 16.4 H.6Z M6.4 17.4 H11 Q10.6 19.6 8.7 19.6 Q6.8 19.6 6.4 17.4Z" fill="#f2f2f2" />
        <path d="M11.4 1.4 H16.6 L12.4 6 H17" stroke="#202020" strokeWidth="3" fill="none" />
        <path d="M11.4 1.4 H16.6 L12.4 6 H17" stroke="#fff" strokeWidth="1.3" fill="none" />
        <path d="M6 7.6 H10 L6 12.4 H10.4" stroke="#202020" strokeWidth="1.4" fill="none" />
      </svg>
      <div className="relative mr-[25px] ml-[22px] h-[28px] w-[29px]">
        <svg width="28" height="22" viewBox="0 0 28 22">
          <defs>
            <linearGradient id="preA" x1="0" y1="0" x2="0" y2="1">
              <stop offset="0" stopColor="#1c8df0" />
              <stop offset=".5" stopColor="#3ec6b0" />
              <stop offset="1" stopColor="#f2d417" />
            </linearGradient>
            <linearGradient id="preB" x1="0" y1="0" x2="0" y2="1">
              <stop offset="0" stopColor="#a667f2" />
              <stop offset="1" stopColor="#f2606a" />
            </linearGradient>
          </defs>
          <path d="M12 0 H18 Q20 0 21 3 L22 8 H13Z" fill="#1555cc" />
          <path d="M7 0 H16 Q14 1 13 4 L10 15 Q9 19 6 19 H3 Q-1 18.6 .4 14 L3 4 Q4 0 7 0Z" fill="url(#preA)" />
          <path d="M13 22 L17 10 Q18 7 20 7 H24 Q28.6 7 28 12 L25.6 22Z" fill="url(#preB)" />
        </svg>
        <span className="absolute right-0 bottom-0 flex h-[10px] w-[23px] items-center justify-center rounded-[2px] bg-[#ffc20e] text-[8.5px] leading-none font-bold text-black">
          PRE
        </span>
      </div>
    </footer>
  );
}

export default function App() {
  return (
    <div className="flex h-[1080px] w-[1920px] flex-col overflow-hidden bg-[#3b3b3b]">
      <TabBar />
      <Toolbar />
      <div className="flex h-[933px] shrink-0">
        <div className="mb-[5px] ml-[5px] flex h-[928px] flex-1 overflow-hidden rounded-[10px]">
          <Website />
          <ScrollBar />
        </div>
        <SideBar />
      </div>
      <Taskbar />
    </div>
  );
}
